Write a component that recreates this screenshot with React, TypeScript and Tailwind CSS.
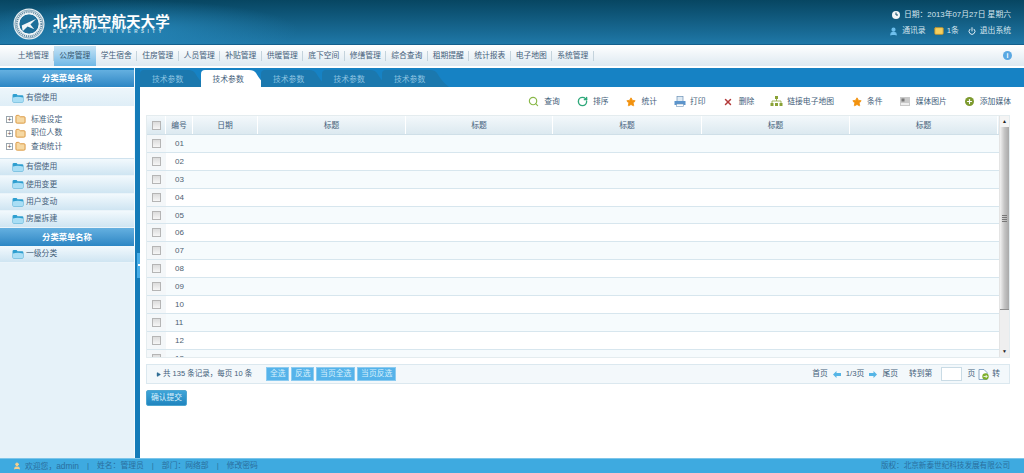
import { Search, RotateCw, Star, X, Plus, Power, Mail, User, Folder, Play } from 'lucide-react';

const FONT = "font-['Liberation_Sans','Noto_Sans_CJK_SC',sans-serif]";

const navItems = ['土地管理', '公房管理', '学生宿舍', '住房管理', '人员管理', '补贴管理', '供暖管理', '底下空间', '修缮管理', '综合查询', '租期提醒', '统计报表', '电子地图', '系统管理'];

function BlueFolder() {
  return (
    <svg width="12" height="10" viewBox="0 0 13 11" className="flex-shrink-0">
      <path d="M0.5 2.5 Q0.5 1 2 1 H5 L6 2.5 H11 Q12.5 2.5 12.5 4 V9 Q12.5 10.5 11 10.5 H2 Q0.5 10.5 0.5 9 Z" fill="#2f9fd0" />
      <path d="M1 5 Q6 3.5 12 5 V9 Q12 10 11 10 H2 Q1 10 1 9 Z" fill="#a9def5" />
    </svg>
  );
}

function GripDots() {
  return <div className="absolute left-[12px] top-[3px] w-[4px] h-[11px] bg-[radial-gradient(#d6eaf7_40%,transparent_45%)] bg-[length:2px_2px] opacity-70" />;
}

function SideHead({ title, h }: { title: string; h: string }) {
  return (
    <div className={`relative ${h} flex-shrink-0 flex items-center justify-center bg-gradient-to-b from-[#64b0e0] to-[#2b86c4] text-white font-bold text-[8.3px]`}>
      <GripDots />
      {title}
    </div>
  );
}

function SideItem({ title }: { title: string }) {
  return (
    <div className="h-[17.25px] flex-shrink-0 flex items-center gap-[1px] pl-[12px] bg-gradient-to-b from-[#f2f9fd] to-[#cfe5f2] border-b border-[#eaf4fa] text-[7.8px] text-[#44607a]">
      <BlueFolder />
      <span className="ml-[1px]">{title}</span>
    </div>
  );
}

function TreeRow({ title }: { title: string }) {
  return (
    <div className="h-[13.5px] flex items-center pl-[6px] text-[7.8px] text-[#44607a]">
      <span className="w-[7px] h-[7px] border border-[#9aa5ad] bg-white text-[7px] leading-[5px] text-center text-[#555] flex-shrink-0">+</span>
      <Folder size={11} className="ml-[2px] text-[#d9943a] fill-[#f6d9a4] flex-shrink-0" />
      <span className="ml-[5px]">{title}</span>
    </div>
  );
}

function Tab({ active }: { active?: boolean }) {
  return (
    <div className={active
      ? 'relative w-[60.5px] h-[17px] pl-[12px] text-[#44607a] text-[7.8px] leading-[19px]'
      : 'relative w-[60.5px] h-[17px] pl-[12px] text-[#8fc3e0] text-[7.8px] leading-[19px]'}>
      <svg width="68" height="17" viewBox="0 0 68 17" className="absolute left-0 top-0">
        <path d="M0 17 V4 Q0 0 4 0 H48 Q53 0 55 3 Q60 12 67 17 Z" fill={active ? '#ffffff' : '#1b78ae'} />
      </svg>
      <span className="relative">技术参数</span>
    </div>
  );
}

function Tool({ icon, label }: { icon: React.ReactNode; label: string }) {
  return (
    <div className="flex items-center h-[12px] text-[7.8px] text-[#44607a]">
      <span className="w-[13px] h-[12px] flex items-center justify-center mr-[4px]">{icon}</span>
      {label}
    </div>
  );
}

function Checkbox() {
  return <span className="block w-[9px] h-[9px] border border-[#b5b5b5] bg-gradient-to-b from-[#dcdcdc] to-[#f6f6f6] flex-shrink-0" />;
}

function Row({ no, odd }: { no: string; odd: boolean }) {
  return (
    <div className={`flex h-[17.9px] flex-shrink-0 border-b border-[#d7e6ee] ${odd ? 'bg-[#f6fbfd]' : 'bg-white'}`}>
      <div className="w-[19px] bg-[#f4f7f9] flex items-center justify-center"><Checkbox /></div>
      <div className="pl-[9px] leading-[17px] text-[8px] text-[#4d6070]">{no}</div>
    </div>
  );
}

const rows = ['01', '02', '03', '04', '05', '06', '07', '08', '09', '10', '11', '12'];

function HeadCell({ w, label }: { w: string; label: string }) {
  return (
    <div className={`${w} h-full border-r border-white text-center leading-[20px] flex-shrink-0`}>{label}</div>
  );
}

function SmallBtn({ label, w }: { label: string; w: string }) {
  return <div className={`${w} h-[14px] bg-[#55b3ea] border border-[#8ccbf0] text-[#d8f0fc] text-[7.8px] leading-[12px] text-center`}>{label}</div>;
}

function PageArrow({ left }: { left?: boolean }) {
  return (
    <svg width="8" height="7" viewBox="0 0 8 7" className={left ? 'mx-[5px]' : 'mx-[5px] rotate-180'}>
      <path d="M0 3.5 L3.5 0 V2 H8 V5 H3.5 V7 Z" fill="#55b5e6" />
    </svg>
  );
}

export default function App() {
  return (
    <div className={`${FONT} w-[1024px] h-[473px] flex flex-col overflow-hidden bg-white`}>
      {/* header */}
      <div className="h-[45px] flex-shrink-0 bg-gradient-to-b from-[#074662] to-[#1f78a8] border-b border-[#135f8c] flex justify-between relative overflow-hidden">
        <div className="absolute left-0 top-0 w-[300px] h-[45px] bg-[radial-gradient(ellipse_at_130px_30px,#2a8fc4_0%,transparent_70%)] opacity-70" />
        <div className="relative flex items-start pl-[13px] pt-[8px]">
          <svg width="32" height="32" viewBox="0 0 33 33">
            <circle cx="16.5" cy="16.5" r="16" fill="#e6eef2" />
            <circle cx="16.5" cy="16.5" r="14.5" fill="none" stroke="#5d8ba6" strokeWidth="0.7" />
            <circle cx="16.5" cy="16.5" r="10.5" fill="#1e6f9a" stroke="#fff" strokeWidth="1" />
            <path d="M9 18 L24 11 L18 17 L22 22 L15 19 L10 24 Z" fill="#f2f6f8" />
            <circle cx="16.5" cy="16.5" r="12.7" fill="none" stroke="#55819c" strokeWidth="2" strokeDasharray="1 1" />
          </svg>
          <div className="ml-[8px] mt-[5px] flex flex-col items-start">
            <div className="text-white font-bold text-[14.6px] leading-[16px] whitespace-nowrap font-['Noto_Sans_CJK_SC',sans-serif]">北京航空航天大学</div>
            <div className="text-[#cfe3ee] text-[4.5px] leading-[5px] font-bold tracking-[3.5px] whitespace-nowrap">BEIHANG UNIVERSITY</div>
          </div>
        </div>
        <div className="relative pr-[13px] pt-[8px] text-[7.8px] text-[#d5e5ee] flex flex-col items-end whitespace-nowrap">
          <div className="flex items-center h-[14px]">
            <svg width="8" height="8" viewBox="0 0 8 8" className="mr-[4px]">
              <circle cx="4" cy="4" r="4" fill="#f2f6f8" />
              <path d="M4 1.5 V4 H6" fill="none" stroke="#0a4a68" strokeWidth="1" />
            </svg>
            日期：2013年07月27日 星期六
          </div>
          <div className="flex items-center h-[14px] mt-[2px]">
            <User size={9} strokeWidth={3} className="text-[#6fc0ee] fill-[#6fc0ee] mr-[4px]" />
            <span>通讯录</span>
            <Mail size={10} className="ml-[8px] mr-[3px] text-[#c9962a] fill-[#f5cf5e]" />
            <span>1条</span>
            <Power size={8} strokeWidth={3} className="ml-[9px] mr-[4px] text-[#dcecf5]" />
            <span>退出系统</span>
          </div>
        </div>
      </div>

      {/* nav */}
      <div className="h-[23px] flex-shrink-0 bg-gradient-to-b from-white to-[#dde9f1] border-b-2 border-white flex items-center relative pl-[12.5px]">
        {navItems.map((item, i) => (
          <div key={item} className={i === 1
            ? 'h-[20px] w-[41.5px] mt-[1px] bg-gradient-to-b from-[#c5e3f5] to-[#6fb8e6] text-[#33566f] text-[7.8px] leading-[20px] text-center'
            : 'h-[20px] w-[41.5px] mt-[1px] text-[#44607a] text-[7.8px] leading-[20px] text-center relative'}>
            {item}
            {i !== 1 && <span className="absolute right-0 top-[5px] h-[10px] w-px bg-[#c4d3dc]" />}
          </div>
        ))}
        <span className="absolute right-[12px] top-[6px] w-[9px] h-[9px] rounded-full bg-[#5aa8e2] text-white text-[7px] font-bold leading-[9px] text-center">i</span>
      </div>

      <div className="flex-1 flex min-h-0">
        {/* sidebar */}
        <div className="w-[135px] flex-shrink-0 bg-[#e6f2f9] border-r border-[#f4fafd] flex flex-col">
          <div className="h-[2px] flex-shrink-0 bg-[#1682c4]" />
          <SideHead title="分类菜单名称" h="h-[17px]" />
          <div className="h-[19px] flex-shrink-0 flex items-center pl-[12px] pt-[1px] gap-[2px] bg-gradient-to-b from-[#edf6fb] to-[#dfeef7] text-[7.8px] text-[#44607a] border-t border-[#fff]">
            <BlueFolder />
            有偿使用
          </div>
          <div className="bg-white h-[53px] flex-shrink-0 pt-[7px] border-b border-[#cfe2ee]">
            <TreeRow title="标准设定" />
            <TreeRow title="职位人数" />
            <TreeRow title="查询统计" />
          </div>
          <SideItem title="有偿使用" />
          <SideItem title="使用变更" />
          <SideItem title="用户变动" />
          <SideItem title="房屋拆建" />
          <SideHead title="分类菜单名称" h="h-[18px]" />
          <SideItem title="一级分类" />
        </div>

        {/* splitter */}
        <div className="w-[5px] flex-shrink-0 bg-[#147bb8] relative">
          <div className="absolute left-[2px] top-[185px] w-[3px] h-[25px] bg-[#48aee8]" />
          <div className="absolute left-[3px] top-[196px] w-[2px] h-[2px] bg-white" />
        </div>

        {/* main */}
        <div className="flex-1 min-w-0 flex flex-col">
          <div className="h-[19px] flex-shrink-0 bg-[#1682c4] flex items-end">
            <Tab />
            <Tab active />
            <Tab />
            <Tab />
            <Tab />
          </div>

          <div className="h-[28px] flex items-center justify-end pt-[1px] pr-[13px] gap-[16px] flex-shrink-0">
            <Tool icon={<Search size={11} strokeWidth={2.5} className="text-[#8ab84a]" />} label="查询" />
            <Tool icon={<RotateCw size={11} strokeWidth={3} className="text-[#2ea87a]" />} label="排序" />
            <Tool icon={<Star size={10} className="text-[#f2920f] fill-[#f2920f]" />} label="统计" />
            <Tool icon={
              <svg width="12" height="11" viewBox="0 0 12 11">
                <rect x="3" y="0.5" width="6" height="5" fill="#dfeaf3" stroke="#6d93b8" strokeWidth="0.7" />
                <rect x="0.5" y="5" width="11" height="4" fill="#5b94cc" />
                <rect x="2.5" y="8" width="7" height="2.5" fill="#fff" stroke="#6d93b8" strokeWidth="0.6" />
              </svg>
            } label="打印" />
            <Tool icon={<X size={10} strokeWidth={3.5} className="text-[#b33a3a]" />} label="删除" />
            <Tool icon={
              <svg width="13" height="11" viewBox="0 0 13 11">
                <rect x="5" y="0" width="3" height="3" fill="#8aa236" />
                <path d="M6.5 3 V5 M2 7 V5 H11 V7" fill="none" stroke="#8aa236" strokeWidth="0.8" />
                <rect x="0.5" y="7" width="3" height="3" fill="#8aa236" />
                <rect x="5" y="7" width="3" height="3" fill="#8aa236" />
                <rect x="9.5" y="7" width="3" height="3" fill="#8aa236" />
              </svg>
            } label="链接电子地图" />
            <Tool icon={<Star size={10} className="text-[#f2920f] fill-[#f2920f]" />} label="条件" />
            <Tool icon={
              <svg width="10" height="9" viewBox="0 0 10 9">
                <rect x="0" y="0" width="10" height="9" fill="#c9c9c9" />
                <rect x="1.5" y="1.5" width="3" height="3" fill="#777" />
                <rect x="1" y="6" width="8" height="2" fill="#eee" />
              </svg>
            } label="媒体图片" />
            <Tool icon={<span className="w-[9px] h-[9px] rounded-full bg-[#7d9a2e] flex items-center justify-center"><Plus size={7} strokeWidth={4} className="text-white" /></span>} label="添加媒体" />
          </div>

          {/* grid */}
          <div className="ml-[6px] w-[864px] h-[243px] flex-shrink-0 border border-[#e4ecef] flex overflow-hidden">
            <div className="flex-1 min-w-0 flex flex-col overflow-hidden">
              <div className="h-[19px] flex-shrink-0 flex bg-gradient-to-b from-[#f3f8fb] to-[#dce9f0] border-b border-[#cfdfe8] text-[7.8px] text-[#44607a]">
                <div className="w-[19px] flex items-center justify-center border-r border-white flex-shrink-0"><Checkbox /></div>
                <HeadCell w="w-[27px]" label="编号" />
                <HeadCell w="w-[65px]" label="日期" />
                <HeadCell w="w-[148px]" label="标题" />
                <HeadCell w="w-[147px]" label="标题" />
                <HeadCell w="w-[149px]" label="标题" />
                <HeadCell w="w-[148px]" label="标题" />
                <HeadCell w="w-[148px]" label="标题" />
              </div>
              {rows.map((no, i) => <Row key={no} no={no} odd={i % 2 === 0} />)}
              <div className="flex flex-1 bg-[#f6fbfd] overflow-hidden">
                <div className="w-[19px] bg-[#f4f7f9] flex justify-center pt-[4px]"><Checkbox /></div>
                <div className="pl-[9px] text-[8px] text-[#4d6070] leading-[17px]">13</div>
              </div>
            </div>
            <div className="w-[10px] flex-shrink-0 bg-[#efefef] flex flex-col items-center border-l border-[#e4e4e4]">
              <div className="h-[11px] flex-shrink-0 w-full text-[#222] text-[5px] leading-[11px] text-center bg-[#f4f4f4]">▲</div>
              <div className="w-full h-[183px] flex-shrink-0 bg-gradient-to-r from-[#f2f2f2] via-[#c4c4c4] to-[#a9a9a9] border-b border-[#8f8f8f] flex items-center justify-center">
                <div className="w-[5px] h-[7px] bg-[repeating-linear-gradient(#777_0px,#777_1px,transparent_1px,transparent_2px)]" />
              </div>
              <div className="flex-1" />
              <div className="h-[11px] flex-shrink-0 text-[#222] text-[5px] leading-[11px]">▼</div>
            </div>
          </div>

          {/* pager */}
          <div className="ml-[6px] mt-[6px] w-[864px] h-[20px] flex-shrink-0 bg-[#f3f8fb] border border-[#dbe8ef] flex items-center text-[7.8px] text-[#44607a]">
            <Play size={5} className="ml-[9px] mr-[2px] text-[#2b6a93] fill-[#2b6a93]" />
            <span className="text-[7.5px]">共 135 条记录，每页 10 条</span>
            <div className="flex gap-[2px] ml-[14px]">
              <SmallBtn label="全选" w="w-[23px]" />
              <SmallBtn label="反选" w="w-[23px]" />
              <SmallBtn label="当页全选" w="w-[39px]" />
              <SmallBtn label="当页反选" w="w-[39px]" />
            </div>
            <div className="ml-auto flex items-center pr-[9px]">
              <span>首页</span>
              <PageArrow left />
              <span>1/3页</span>
              <PageArrow />
              <span>尾页</span>
              <span className="ml-[11px]">转到第</span>
              <span className="w-[21px] h-[14px] ml-[9px] bg-white border border-[#c9dbe5]" />
              <span className="ml-[5px]">页</span>
              <svg width="11" height="11" viewBox="0 0 11 11" className="mx-[3px]">
                <path d="M1 0.5 H6 L9 3.5 V10.5 H1 Z" fill="#fff" stroke="#6d93b8" strokeWidth="0.8" />
                <circle cx="7.5" cy="7.5" r="3.2" fill="#7fb02c" />
                <path d="M5.5 7.5 H9 M7.7 6 L9.2 7.5 L7.7 9" fill="none" stroke="#fff" strokeWidth="0.8" />
              </svg>
              <span>转</span>
            </div>
          </div>

          <div className="ml-[6px] mt-[6px] w-[41px] h-[16px] flex-shrink-0 rounded-[2px] bg-gradient-to-b from-[#3ea4d8] to-[#1f85bf] border border-[#4fa6d0] text-[#d8f0fc] text-[7.8px] leading-[14px] text-center">确认提交</div>
          <div className="flex-1" />
        </div>
      </div>

      {/* footer */}
      <div className="h-[15px] flex-shrink-0 bg-[#3eaae0] border-t border-[#7cc5ea] flex items-center text-[7.8px] text-[#2a6f9e] pl-[13px] pr-[14px] whitespace-nowrap">
        <User size={8} strokeWidth={3} className="text-[#f5cf8e] fill-[#f5cf8e] mr-[4px]" />
        <span>欢迎您，<span className="text-[8.4px]">admin</span></span>
        <span className="mx-[8px]">|</span>
        <span>姓名：管理员</span>
        <span className="mx-[8px]">|</span>
        <span>部门：网络部</span>
        <span className="mx-[8px]">|</span>
        <span>修改密码</span>
        <span className="ml-auto text-[7.6px]">版权：北京新泰世纪科技发展有限公司</span>
      </div>
    </div>
  );
}
